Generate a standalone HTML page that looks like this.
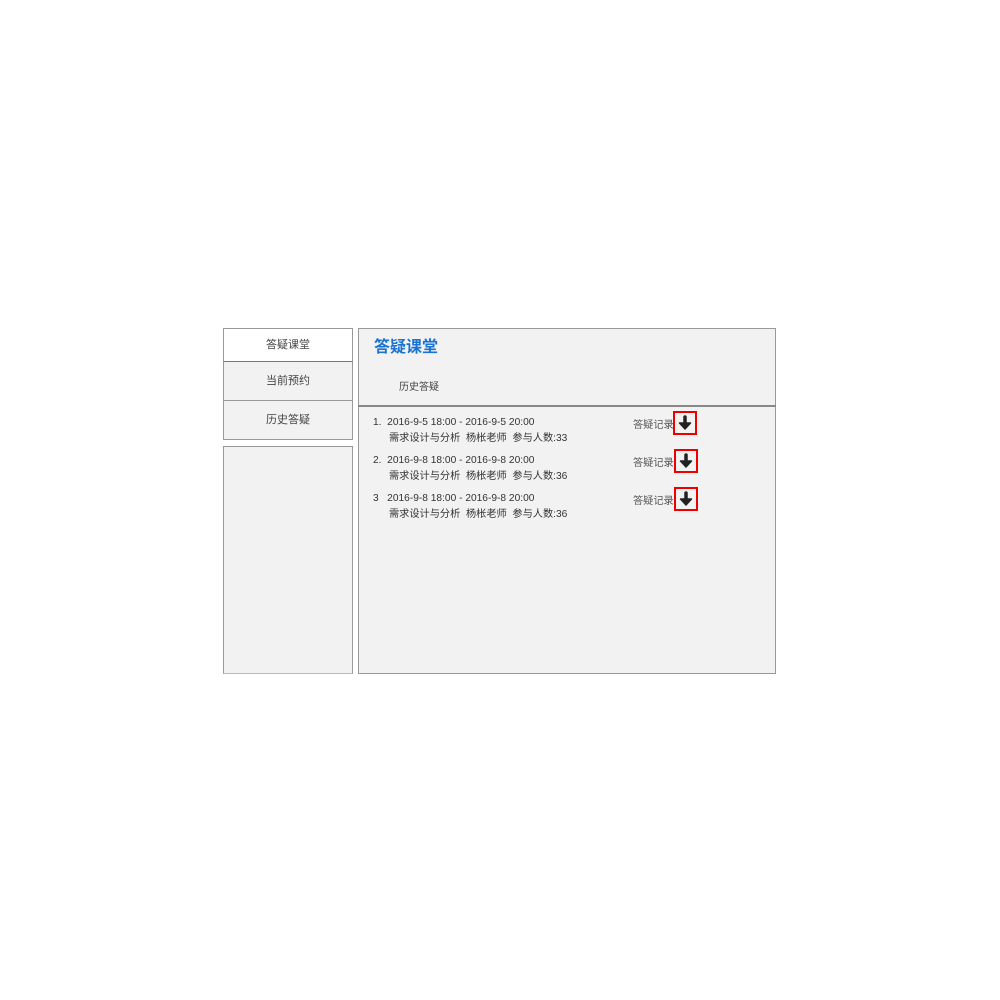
<html><head><style>
body{margin:0;width:1000px;height:1000px;background:#fff;position:relative;font-family:"Liberation Sans","Noto Sans CJK SC",sans-serif;}
.a{position:absolute;box-sizing:border-box;}
.side{border:1px solid #999;font-size:11px;color:#444;text-align:center;}
.t{position:absolute;font-size:10.2px;color:#333;white-space:nowrap;}
.rb{position:absolute;width:24px;height:24px;border:2px solid #e00;box-sizing:border-box;background:#f2f2f2;}
</style></head><body>
<div class="a side" style="left:223px;top:328px;width:130px;height:34px;background:#fff;line-height:32px;">答疑课堂</div>
<div class="a side" style="left:223px;top:361px;width:130px;height:40px;background:#f2f2f2;line-height:38px;border-top:1px solid #777;">当前预约</div>
<div class="a side" style="left:223px;top:400px;width:130px;height:40px;background:#f2f2f2;line-height:38px;">历史答疑</div>
<div class="a" style="left:223px;top:446px;width:130px;height:228px;background:#f2f2f2;border:1px solid #999;border-bottom:1px solid #bbb"></div>
<div class="a" style="left:358px;top:328px;width:418px;height:346px;background:#f2f2f2;border:1px solid #999;"></div>
<div class="a" style="left:358px;top:405px;width:418px;height:2px;background:#888;"></div>
<div class="t" style="left:374px;top:333px;font-size:16px;color:#1a73d0;font-weight:bold;">答疑课堂</div>
<div class="t" style="left:399px;top:378px;font-size:10px;color:#444;">历史答疑</div>

<div class="t" style="left:373px;top:417px;">1.&nbsp; 2016-9-5 18:00 - 2016-9-5 20:00</div>
<div class="t" style="left:389px;top:429px;">需求设计与分析 &nbsp;杨枨老师 &nbsp;参与人数:33</div>
<div class="t" style="left:373px;top:455px;">2.&nbsp; 2016-9-8 18:00 - 2016-9-8 20:00</div>
<div class="t" style="left:389px;top:467px;">需求设计与分析 &nbsp;杨枨老师 &nbsp;参与人数:36</div>
<div class="t" style="left:373px;top:493px;">3&nbsp;&nbsp; 2016-9-8 18:00 - 2016-9-8 20:00</div>
<div class="t" style="left:389px;top:505px;">需求设计与分析 &nbsp;杨枨老师 &nbsp;参与人数:36</div>

<div class="t" style="left:633px;top:416px;color:#555;">答疑记录</div>
<div class="t" style="left:633px;top:454px;color:#555;">答疑记录</div>
<div class="t" style="left:633px;top:492px;color:#555;">答疑记录</div>
<svg width="0" height="0" style="position:absolute"><defs><g id="ar"><path d="M10 4V13" stroke="#222" stroke-width="3.5" stroke-linecap="round"/><path d="M4.5 10L10 16L15.5 10Z" fill="#222" stroke="#222" stroke-width="1.5" stroke-linejoin="round"/></g></defs></svg>
<div class="rb" style="left:673px;top:411px;"><svg width="20" height="20"><use href="#ar"/></svg></div>
<div class="rb" style="left:674px;top:449px;"><svg width="20" height="20"><use href="#ar"/></svg></div>
<div class="rb" style="left:674px;top:487px;"><svg width="20" height="20"><use href="#ar"/></svg></div>
</body></html>
